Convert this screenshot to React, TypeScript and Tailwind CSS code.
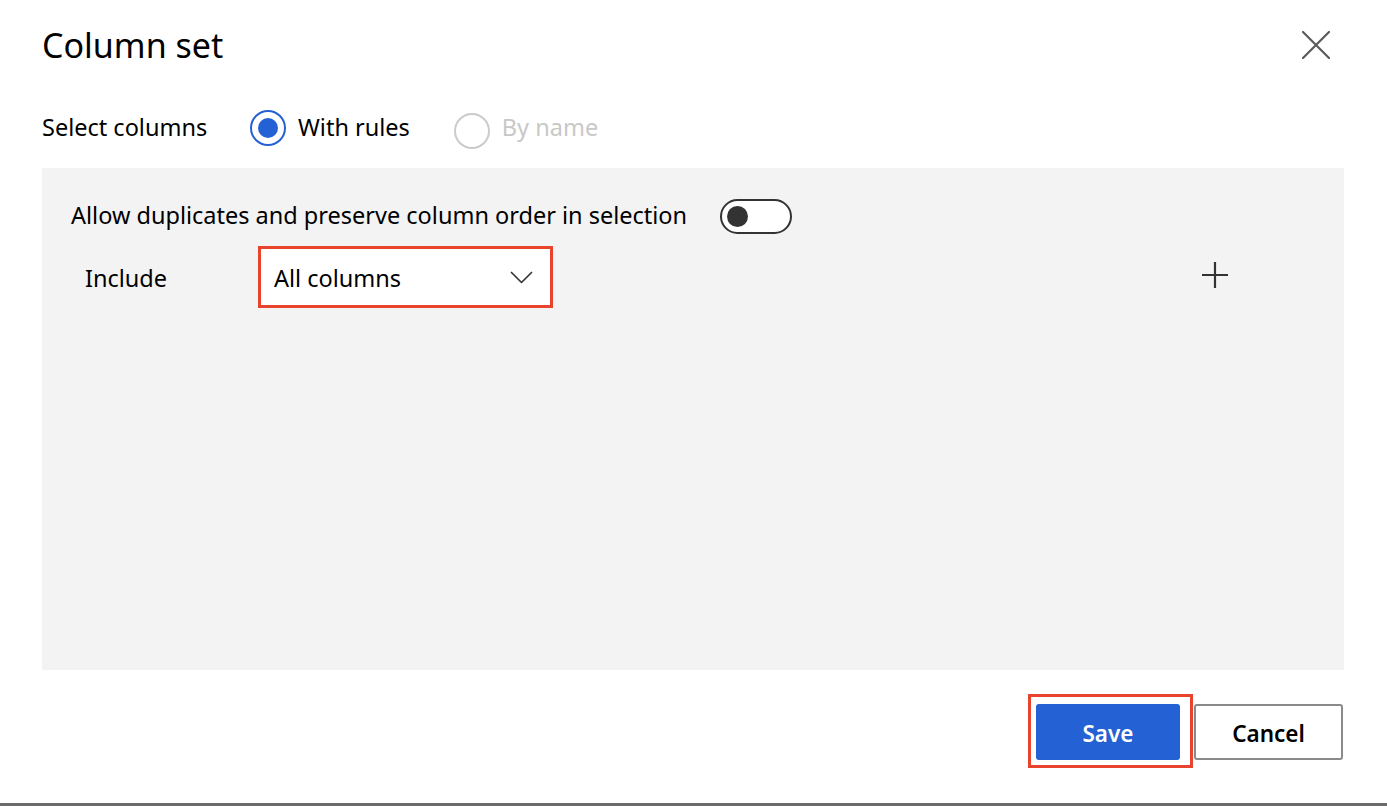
import React from "react";

export default function App() {
  return (
    <div
      className="relative flex h-[806px] w-[1387px] flex-col overflow-hidden bg-white text-[#1b1a19]"
      style={{ fontFamily: '"Segoe UI", "Noto Sans", "Open Sans", sans-serif' }}
    >
      {/* Header */}
      <div className="flex h-[90px] shrink-0 items-center justify-between pl-[42px] pr-[57px]">
        <h1 className="text-[34px] leading-none font-normal text-[#000]">Column set</h1>
        <button className="flex h-[28px] w-[28px] items-center justify-center">
          <svg width="28" height="28" viewBox="0 0 28 28" fill="none">
            <path d="M1 1 L27 27 M27 1 L1 27" stroke="#5a5a5a" strokeWidth="2.2" strokeLinecap="round" />
          </svg>
        </button>
      </div>

      {/* Radio row */}
      <div className="flex h-[76px] shrink-0 items-center pl-[42px] text-[23.5px]">
        <span className="w-[208px] text-[#000]">Select columns</span>
        <label className="flex items-center">
          <span className="flex h-[36px] w-[36px] items-center justify-center rounded-full border-2 border-[#2461d4]">
            <span className="h-[20px] w-[20px] rounded-full bg-[#2461d4]" />
          </span>
          <span className="ml-[12px] text-[#000]">With rules</span>
        </label>
        <label className="ml-[44px] flex items-center pt-[6px]">
          <span className="h-[36px] w-[36px] rounded-full border-2 border-[#cbcbcb]" />
          <span className="ml-[12px] -mt-[6px] text-[#c8c8c8]">By name</span>
        </label>
      </div>

      {/* Panel */}
      <div className="mx-[42px] mr-[43px] mt-[2px] h-[502px] shrink-0 bg-[#f3f3f3] pt-[30px]">
        <div className="flex h-[36px] items-center pl-[29px] text-[23.5px]">
          <span className="text-[#000]">Allow duplicates and preserve column order in selection</span>
          <span className="ml-[33px] flex h-[35px] w-[72px] items-center rounded-full border-2 border-[#333333] bg-white pl-[5px]">
            <span className="h-[21px] w-[21px] rounded-full bg-[#333333]" />
          </span>
        </div>

        <div className="mt-[12px] flex h-[62px] items-center pl-[43px] text-[23.5px]">
          <span className="w-[173px] pt-[4px] text-[#000]">Include</span>
          <div className="flex h-[62px] w-[295px] items-center justify-between border-[3px] border-[#e8432d] bg-white pl-[13px] pr-[17px]">
            <span className="pt-[3px] text-[#000]">All columns</span>
            <svg width="23" height="13" viewBox="0 0 23 13" fill="none">
              <path d="M1 1 L11.5 11.5 L22 1" stroke="#333" strokeWidth="1.6" strokeLinejoin="round" />
            </svg>
          </div>
          <div className="ml-auto mr-[116px] -mt-[4px] flex h-[26px] w-[26px] items-center justify-center">
            <svg width="26" height="26" viewBox="0 0 26 26" fill="none">
              <path d="M13 0 V26 M0 13 H26" stroke="#333" strokeWidth="2.2" />
            </svg>
          </div>
        </div>
      </div>

      {/* Footer */}
      <div className="mt-[24px] flex shrink-0 items-start justify-end pr-[44px]">
        <div className="border-[3px] border-[#e8432d] pb-[5px] pl-[5px] pr-[10px] pt-[7px]">
          <button className="flex h-[56px] w-[144px] items-center justify-center rounded-[3px] bg-[#2461d4] pt-[3px] text-[22.5px] font-semibold text-white">
            Save
          </button>
        </div>
        <button className="ml-[1px] mt-[10px] flex h-[56px] w-[149px] items-center justify-center rounded-[3px] border-2 border-[#8a8a8a] bg-white pt-[3px] text-[22.5px] font-semibold text-[#000]">
          Cancel
        </button>
      </div>

      {/* bottom edge */}
      <div className="mt-auto h-[3px] shrink-0 bg-[#6b6b6b]" />
    </div>
  );
}
